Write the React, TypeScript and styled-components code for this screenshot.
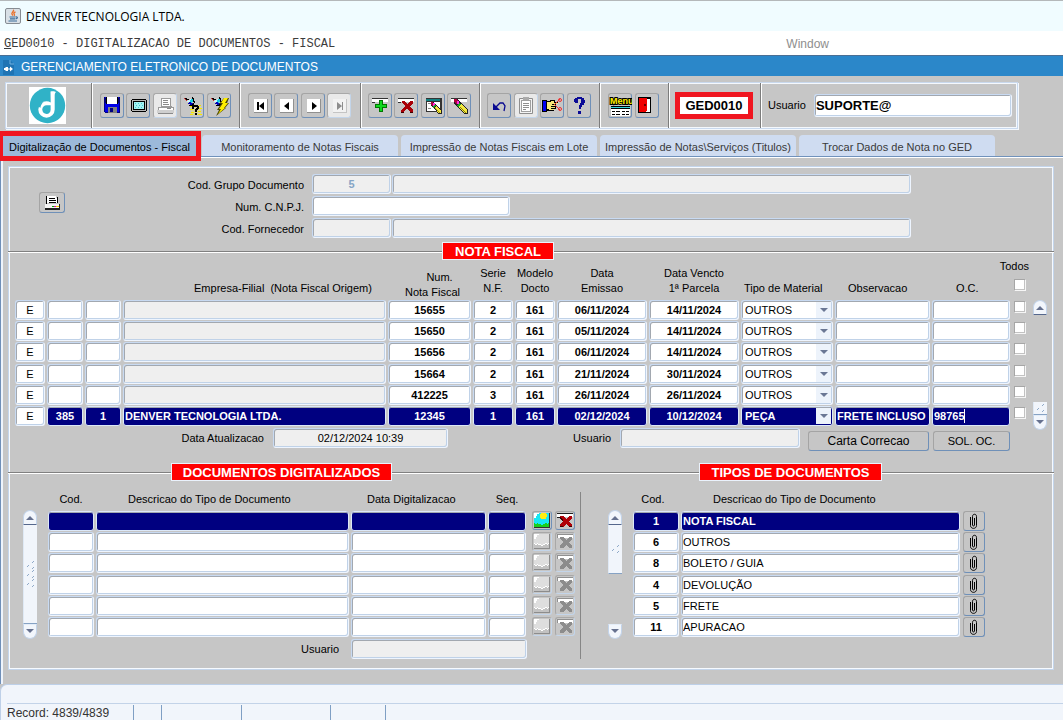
import React from 'react';
import styled, { createGlobalStyle, css } from 'styled-components';

const GlobalStyle = createGlobalStyle`
  *, *::before, *::after { box-sizing: border-box; }
  body {
    margin: 0;
    background: #c6c6c6;
    color: #000;
    font-family: "Liberation Sans", Arial, sans-serif;
    font-size: 11px;
    line-height: 15px;
    overflow-x: hidden;
  }
  button, input, select { font: inherit; color: inherit; margin: 0; }
`;

/* ---------- window frame ---------- */

const Page = styled.div`
  min-height: 100vh;
  display: flex;
  flex-direction: column;
`;

const TitleBar = styled.header`
  display: flex;
  align-items: center;
  gap: 5px;
  height: 31px;
  padding-left: 5px;
  border-top: 1px solid #b4b8ba;
  background: #f0fcff;
  font-family: "Open Sans", "Noto Sans", sans-serif;
  font-size: 12px;
`;

const MenuBar = styled.nav`
  display: flex;
  justify-content: space-between;
  align-items: center;
  height: 24px;
  padding: 2px 234px 0 4px;
  background: #fff;
`;

const MenuLink = styled.a<{ $mono?: boolean }>`
  color: ${p => (p.$mono ? '#3c3c3c' : '#8e8e8e')};
  font-family: ${p => (p.$mono ? '"Liberation Mono", "Courier New", monospace' : 'inherit')};
  font-size: 12px;
  text-decoration: none;
  white-space: nowrap;
`;

const FormCaption = styled.div`
  display: flex;
  align-items: center;
  gap: 6px;
  height: 21px;
  padding: 2px 0 0 2px;
  border-top: 1px solid #4a6f94;
  background: #2b87c9;
  color: #fff;
  h1 { margin: 0; font-size: 12px; font-weight: 400; }
`;

const Workspace = styled.main`
  flex: 1;
  display: flex;
  flex-direction: column;
  background: #c6c6c6;
`;

/* ---------- toolbar ---------- */

const Toolbar = styled.div`
  display: flex;
  height: 47px;
  margin: 6px 45px 0 5px;
  border: 1px solid #c9d9ee;
  box-shadow: inset 0 0 0 1px #f4f8fd, 1px 1px 0 #f4f8fd;
`;

const ToolCell = styled.div<{ $width?: number }>`
  display: flex;
  align-items: center;
  justify-content: center;
  gap: 2px;
  flex: ${p => (p.$width ? `0 0 ${p.$width}px` : '1')};
  border-right: 1px solid #fff;
  &::after {
    content: '';
    align-self: stretch;
    width: 1px;
    margin-left: auto;
    background: #7c7c7c;
  }
  &:last-child { gap: 8px; border-right: 0; padding: 0 5px 0 6px; }
  &:last-child::after { content: none; }
`;

const ToolGroup = styled.div<{ $width: number }>`
  display: flex;
  justify-content: space-between;
  width: ${p => p.$width}px;
  margin-left: auto;
`;

const bevel = css`
  border: 1px solid;
  border-color: #a4a4a4 #6f90b8 #6f90b8 #a4a4a4;
  border-radius: 3px;
  &:disabled { border-color: #a8a8a8 #c3d5ea #c3d5ea #a8a8a8; }
`;

const IconButton = styled.button<{ $w?: number; $h?: number; $pale?: boolean }>`
  ${bevel}
  display: block;
  width: ${p => p.$w ?? 24}px;
  height: ${p => p.$h ?? 25}px;
  padding: 0;
  background: ${p => (p.$pale ? '#e9e9e9' : '#c6c6c6')};
  svg { display: block; margin: -1px; }
`;

const LogoCell = styled.div`
  width: 37px;
  height: 37px;
  margin-left: auto;
  background: #fff;
`;

const ProgramCode = styled.output`
  width: 78px;
  height: 27px;
  margin-left: auto;
  border: 5px solid #f01620;
  background: #fff;
  font-size: 13px;
  font-weight: 700;
  line-height: 17px;
  text-align: center;
`;

/* ---------- tabs ---------- */

const Tabs = styled.div`
  display: flex;
  align-items: flex-end;
  gap: 3px;
  margin-top: 6px;
  padding: 0 3px 1px;
  height: 23px;
  border-bottom: 1px solid #fff;
  box-shadow: inset 0 -1px 0 #7092bc;
`;

const Tab = styled.button<{ $active?: boolean }>`
  flex: 0 1 196px;
  height: 21px;
  padding: 3px 0 0;
  border: 0;
  border-radius: 4px 4px 0 0;
  background: #cfdcf1;
  color: #3a3a3a;
  white-space: nowrap;
  ${p =>
    p.$active &&
    css`
      position: relative;
      z-index: 1;
      flex-basis: 193px;
      height: 20px;
      margin-right: 3px;
      border-radius: 0;
      outline: 5px solid #f01620;
      background: #9cb9da;
      color: #000;
    `}
`;

/* ---------- form parts ---------- */

type Tone = 'plain' | 'muted' | 'active';

const fieldFrame = css<{ $tone?: Tone }>`
  border: 1px solid;
  border-color: #c8daf2 #eef5ff #eef5ff #c8daf2;
  border-radius: 3px;
  box-shadow: inset 1px 1px 0 #a2a8b0, inset -1px -1px 0 #c0d2e8;
  background: #fff;
  ${p => p.$tone === 'muted' && 'background: #efefef;'}
  ${p =>
    p.$tone === 'active' &&
    css`
      background: #000080;
      color: #fff;
      font-weight: 700;
      border-color: #dce8f8;
      box-shadow: inset 0 1px 0 #a2a8b0;
    `}
`;

const Field = styled.input<{ $tone?: Tone; $w?: number; $center?: boolean; $bold?: boolean; $grow?: boolean }>`
  ${fieldFrame}
  display: block;
  min-width: 0;
  width: ${p => (p.$w ? `${p.$w}px` : '100%')};
  flex: ${p => (p.$grow ? '1' : 'none')};
  height: 20px;
  padding: 0 1px;
  outline: 0;
  text-align: ${p => (p.$center ? 'center' : 'left')};
  ${p => p.$bold && 'font-weight: 700;'}
`;

const UserField = styled(Field)`
  flex: 1;
  height: 23px;
  font-size: 13px;
  font-weight: 700;
`;

const CodeField = styled(Field)`
  color: #86a5c6;
`;

const Panel = styled.section`
  flex: 1;
  border-left: 1px solid #6f8fb8;
  box-shadow: inset 2px 0 0 #eef4fc;
  padding: 8px 9px 14px 7px;
`;

const PanelFrame = styled.div`
  border: 1px solid #c4d5eb;
  box-shadow: inset 0 0 0 1px #f6faff;
  padding: 1px;
  height: 100%;
`;

const Filters = styled.form`
  display: grid;
  grid-template-columns: 29px 26px 1fr;
  padding: 6px 141px 0 0;
`;

const PrintSlot = styled.div`
  padding-top: 18px;
`;

const FilterRows = styled.div`
  display: grid;
  gap: 2px;
`;

const FilterRow = styled.div`
  display: flex;
  gap: 1px;
  label { width: 247px; padding: 4px 8px 0 0; margin-right: -1px; text-align: right; }
`;

/* ---------- section titles ---------- */

const TitleRow = styled.div<{ $top: number }>`
  display: flex;
  height: 18px;
  margin: ${p => p.$top}px -2px 0;
`;

const Rule = styled.div<{ $w?: number }>`
  flex: ${p => (p.$w ? `0 0 ${p.$w}px` : '1')};
  height: 9px;
  align-self: flex-end;
  border-top: 1px solid #808080;
  box-shadow: inset 0 1px 0 #fff;
`;

const SectionTitle = styled.h2<{ $w: number }>`
  width: ${p => p.$w}px;
  margin: 0;
  border: 1px solid #eaf2fc;
  background: #f00;
  color: #fff;
  font-size: 13px;
  font-weight: 700;
  line-height: 17px;
  text-align: center;
  white-space: nowrap;
`;

/* ---------- tables ---------- */

const Grid = styled.table`
  flex: 1;
  min-width: 0;
  width: 100%;
  table-layout: fixed;
  border-spacing: 0;
  td { height: 21px; padding: 0 2px 0 0; vertical-align: top; }
  tbody tr:nth-child(3n) td { height: 22px; }
`;

const Head = styled.th<{ $h: number; $low?: boolean; $indent?: number }>`
  height: ${p => p.$h}px;
  padding: 0 2px ${p => (p.$low ? 0 : 4)}px ${p => p.$indent ?? 0}px;
  vertical-align: bottom;
  font-weight: 400;
  text-align: ${p => (p.$indent ? 'left' : 'center')};
  white-space: pre;
`;

const SelectAll = styled.label`
  display: flex;
  flex-direction: column;
  align-items: flex-end;
  gap: 7px;
  padding-bottom: 5px;
  line-height: 12px;
  input { margin: 0 3px 0 0; }
`;

const Check = styled.input.attrs({ type: 'checkbox' })`
  appearance: none;
  display: block;
  width: 12px;
  height: 12px;
  margin: 1px 0 0 2px;
  border: 1px solid;
  border-color: #a6a6a6 #f6f6f6 #f6f6f6 #a6a6a6;
  box-shadow: inset -1px -1px 0 #c2c2c2;
  background: #fff;
`;

const SelectBox = styled.div`
  position: relative;
  svg { position: absolute; right: 2px; top: 2px; pointer-events: none; }
`;

const Select = styled.select<{ $tone?: Tone }>`
  ${fieldFrame}
  appearance: none;
  display: block;
  width: 100%;
  height: 20px;
  padding: 0 16px 0 3px;
`;

const CaretCell = styled.div`
  position: relative;
  &::after {
    content: '';
    position: absolute;
    left: 32px;
    top: 3px;
    width: 1px;
    height: 14px;
    background: #fff;
  }
`;

const NotesArea = styled.div`
  display: flex;
  align-items: flex-start;
  gap: 2px;
  height: 168px;
  padding: 0 5px;
`;

const BelowRow = styled.div`
  display: flex;
  align-items: flex-start;
  justify-content: space-between;
  height: 23px;
  padding-right: 42px;
`;

const Inline = styled.div<{ $lead?: number }>`
  display: flex;
  gap: 9px;
  label { width: ${p => (p.$lead ? `${p.$lead}px` : 'auto')}; padding-top: 3px; text-align: right; }
`;

const TextButton = styled.button<{ $w: number; $large?: boolean }>`
  ${bevel}
  width: ${p => p.$w}px;
  height: 20px;
  margin: 3px 0 0 ${p => (p.$large ? -1 : -5)}px;
  padding: 0;
  background: #c6c6c6;
  font-size: ${p => (p.$large ? 12 : 11)}px;
`;

const Bottom = styled.div`
  display: flex;
  padding-bottom: 9px;
`;

const Pane = styled.div<{ $basis: number; $left: number; $right: number }>`
  flex: 1 1 ${p => p.$basis}px;
  min-width: 0;
  padding: 0 ${p => p.$right}px 0 ${p => p.$left}px;
`;

const PaneBody = styled.div`
  display: flex;
  align-items: flex-start;
  gap: 11px;
`;

const PaneFoot = styled.div`
  display: flex;
  justify-content: flex-end;
  gap: 12px;
  padding-right: 49px;
  label { padding-top: 3px; }
`;

const Splitter = styled.div`
  width: 1px;
  margin-top: 11px;
  background: #868686;
`;

const RowTool = styled.div<{ $gap: number }>`
  padding-left: ${p => p.$gap}px;
  margin-right: -2px;
`;

/* ---------- scroll bars ---------- */

const Bar = styled.div<{ $top: number; $h: number }>`
  display: flex;
  flex-direction: column;
  flex: 0 0 14px;
  height: ${p => p.$h}px;
  margin-top: ${p => p.$top}px;
`;

const BarButton = styled.button<{ $down?: boolean }>`
  width: 14px;
  height: 15px;
  padding: 0;
  border: 1px solid #c3d4ea;
  border-radius: ${p => (p.$down ? '0 0 7px 7px' : '7px 7px 0 0')};
  ${p => (p.$down ? 'border-top-color: #e4edf8;' : 'border-bottom-color: #55678c;')}
  background: #f2f6fc;
  svg { display: block; margin: 0; }
`;

const Track = styled.div<{ $end?: boolean }>`
  flex: 1;
  display: flex;
  flex-direction: column;
  justify-content: ${p => (p.$end ? 'flex-end' : 'flex-start')};
`;

const Thumb = styled.div<{ $h?: number }>`
  display: flex;
  align-items: center;
  justify-content: center;
  height: ${p => (p.$h ? `${p.$h}px` : '100%')};
  border-left: 1px solid #dfe9f5;
  border-bottom: 1px solid #86a2c4;
  background: #f1f5fb;
`;

/* ---------- status bar ---------- */

const StatusBar = styled.footer`
  height: 36px;
  padding: 18px 0 0 6px;
  border-top: 1px solid #bed0e8;
  border-left: 1px solid #bed0e8;
  border-radius: 7px 0 0 0;
  background: #f1f5fb;
`;

const StatusCells = styled.div`
  display: flex;
  height: 17px;
  border-top: 1px solid #c3d3e8;
  color: #333;
  font-size: 12px;
  line-height: 16px;
`;

const StatusCell = styled.div<{ $w: number }>`
  flex: 0 0 ${p => p.$w}px;
  margin-top: 1px;
  border-right: 1px solid #7f9fc4;
  white-space: nowrap;
`;

/* ---------- icons ---------- */

type ArtProps = { w?: number; h?: number; children: React.ReactNode };

const Art = ({ w = 24, h = 25, children }: ArtProps) => (
  <svg width={w} height={h} viewBox={`0 0 ${w} ${h}`} shapeRendering="crispEdges" aria-hidden="true">
    {children}
  </svg>
);

const JavaIcon = () => (
  <svg width="16" height="16" viewBox="0 0 16 16" aria-hidden="true">
    <rect x=".5" y=".5" width="15" height="15" rx="1.5" fill="#d9e0e6" stroke="#868c92" />
    <path d="M8.300 1.800c1.400 1.700-2.500 2.700-1.200 4.400.7.8.3 1.500.3 1.500M10.500 3.800c-2.200 1-1.700 1.800-1.200 2.500s0 1.200-.3 1.500" fill="none" stroke="#e8702a" strokeWidth="1.400" />
    <path d="M4.500 9h6M5 10.800h5.300M3.500 13h8.500M10.800 9c2-.6 2.200 1.300 0 1.800" fill="none" stroke="#3a6c9a" strokeWidth="1.200" />
  </svg>
);

const FormIcon = () => (
  <svg width="13" height="15" viewBox="0 0 13 15" aria-hidden="true">
    <path d="M1 0h7l4 4v11H1z" fill="#1f74b4" />
    <path d="M8 0v4h4" fill="none" stroke="#6fb0e0" />
    <path d="M5 7H3.500v1H2v2h1.500v1H5zM8 6.500 11 9l-3 2.500z" fill="#fff" />
    <path d="M5.500 7v4M6 9h2" stroke="#fff" />
  </svg>
);

const Logo = () => (
  <svg width="37" height="37" viewBox="0 0 37 37" role="img" aria-label="Denver">
    <circle cx="18.500" cy="18.500" r="17.700" fill="#30b2c7" />
    <path d="M21.500 4.500c2.200-.6 4.500-.3 5.500.5-1 .8-1.300 2-1.300 4v13.500a8.200 8.200 0 1 1-8.200-8.200c1.600 0 3 .4 4.200 1.200z" fill="#fff" />
    <path d="M21.600 18.500v4.300c0 2.600-1.700 4.200-4 4.200-2.500 0-4.300-1.900-4.300-4.400s1.900-4.300 4.300-4.300h4z" fill="#30b2c7" />
    <path d="M9 19.500a9 9 0 0 1 6-4.800c-2.400 1.700-3.500 4-3.500 6z" fill="#30b2c7" />
  </svg>
);

const SaveIcon = () => (
  <Art>
    <path d="M4 4h16v16H5l-1-1z" fill="#0000e8" />
    <path d="M4 5h3v5H4zM17 5h3v5h-3z" fill="#000070" />
    <path d="M4 4h1v15H4zM19 4h1v16h-1zM5 19h15v1H5z" fill="#000080" />
    <rect x="7" y="4" width="10" height="7" fill="#fff" />
    <path d="M6 4h1v7H6zM17 4h1v7h-1z" fill="#000" />
    <rect x="8" y="14" width="9" height="6" fill="#808080" />
    <rect x="10" y="15" width="3" height="4" fill="#000080" />
  </Art>
);

const ScreenIcon = () => (
  <Art>
    <path d="M6 6h14v1h1v11h-1v1H6v-1H5V7h1z" fill="#000" />
    <rect x="6" y="7" width="14" height="11" fill="#b8b8b8" />
    <rect x="7" y="8" width="12" height="9" fill="#000" />
    <rect x="8" y="9" width="10" height="7" fill="#a4f2f2" />
    <path d="M9 10h1v1H9zM12 10h1v1h-1zM15 10h1v1h-1zM10 12h1v1h-1zM13 12h1v1h-1zM16 12h1v1h-1zM9 14h1v1H9zM12 14h1v1h-1zM15 14h1v1h-1z" fill="#48c8d0" />
  </Art>
);

const PrinterOffIcon = () => (
  <Art>
    <path d="M8 5h9l1 8H8z" fill="#fff" stroke="#9a9a9a" />
    <path d="M10 7.500h5M10 9.500h5M10 11.500h6" stroke="#8a8a8a" />
    <rect x="5" y="14" width="15" height="3" fill="#fff" stroke="#9a9a9a" />
    <path d="M4 17h17v3H4z" fill="#cfcfcf" />
    <path d="M5 20h15v1H5zM14 15h4v1h-4z" fill="#8a8a8a" />
  </Art>
);

const Torch = () => (
  <g>
    <path d="M5 5h2v1h2v1h1v1H8V7H7v1H6V7H5z" fill="#000" />
    <path d="M5 6h1v1H5zM6 7h1v1H6zM4 5h1v1H4z" fill="#d03030" />
    <path d="M7 8h1V7h2V6h2v2h-1v2H9V9H7z" fill="#c8f8fc" />
    <path d="M10 7h1V6h1V5h1v2h1v2h-2v1h-1z" fill="#18cce0" />
    <path d="M12 4h1v1h1v3h1v2h-1V9h-1V6h-1z" fill="#000" />
    <path d="M8 10h1v-1h2v1h2v1h-1v1h-2v-1H8z" fill="#0000b8" />
    <path d="M9 12h3v-1h1v-1h1v2h-1v1H9z" fill="#000" />
  </g>
);

const QueryIcon = () => (
  <Art>
    <path d="M11 12h10v10H11z" fill="#eee070" fillOpacity=".5" />
    <path d="M10 13h2v1h-2zM19 12h2v1h-2zM10 16h3v1h-3zM19 15h3v1h-3zM11 19h3v1h-3zM18 18h3v1h-3zM10 21h3v1h-3zM18 21h4v1h-4z" fill="#f4e800" />
    <Torch />
    <path d="M13 12h5v1h1v3h-1v1h-1v2h-2v-3h1v-1h1v-1h-3v2h-2v-3h1zM15 20h2v2h-2z" fill="#000" />
  </Art>
);

const RunQueryIcon = () => (
  <Art>
    <Torch />
    <path d="M17 5h5l-2 5h2l-4 5h1l-10 8 3-6h-2l4-6h-2z" fill="#4a4400" shapeRendering="auto" />
    <path d="M17 5h4l-3 5h3l-4 5h1l-7 6 3-5h-2l4-6h-2z" fill="#ffee00" shapeRendering="auto" />
  </Art>
);

const NavIcon = ({ d, off }: { d: string; off?: boolean }) => (
  <Art>
    <rect x="6" y="6" width="14" height="14" fill={off ? '#c4c4c4' : '#909090'} />
    <rect x="6" y="6" width="13" height="13" fill={off ? '#f2f2f2' : '#fff'} />
    <path d={d} fill={off ? '#8c8c8c' : '#000'} shapeRendering="auto" />
  </Art>
);

const InsertIcon = () => (
  <Art>
    <path d="M4 5h16v4H4z" fill="#fff" />
    <path d="M4 5h16v1H4zM4 9h3v1H4z" fill="#333" />
    <path d="M11 7h4v4h4v4h-4v4h-4v-4H7v-4h4z" fill="#007800" />
    <path d="M12 8h2v4h4v2h-4v4h-2v-4H8v-2h4z" fill="#10d820" />
  </Art>
);

const DeleteIcon = () => (
  <Art>
    <path d="M4 5h16v4H4z" fill="#fff" />
    <path d="M4 5h16v1H4zM4 9h3v1H4z" fill="#333" />
    <path d="M8 8h3l2 3 3-3h3v2l-3 3 3 4v2h-3l-3-4-3 4H7v-2l4-4-3-3z" fill="#a80008" />
    <path d="M7 19h3M16 19h3" stroke="#400000" strokeWidth="1" />
  </Art>
);

const Brush = () => (
  <>
    <path d="M7 6h4l10 11v4h-4L7 10z" fill="#222" />
    <path d="M7 6h3l2 3-3 2-2-2z" fill="#b00040" />
    <path d="M10 8h2v3h-2z" fill="#ff30e0" />
    <path d="M12 10l2 1-3 3-1-2z" fill="#18b020" />
    <path d="M14 11l6 6v3h-3l-5-6z" fill="#f4e840" />
    <path d="M13 14l6 6" stroke="#8a8000" />
  </>
);

const ClearFormIcon = () => (
  <Art>
    <rect x="5" y="5" width="16" height="14" fill="#333" />
    <rect x="5" y="6" width="14" height="2" fill="#108080" />
    <rect x="6" y="9" width="13" height="9" fill="#fff" />
    <path d="M7 10h4v1H7zM7 15h3v1H7z" fill="#888" />
    <g transform="translate(4 4) scale(.8)"><Brush /></g>
  </Art>
);

const ClearRecordIcon = () => (
  <Art>
    <path d="M4 5h16v4H4z" fill="#fff" />
    <path d="M4 5h16v1H4z" fill="#333" />
    <Brush />
  </Art>
);

const UndoIcon = () => (
  <Art>
    <g shapeRendering="auto">
      <path d="M6 10v7h7z" fill="#0a0a90" />
      <path d="M9 14l4-4h3l2 3-1 5" fill="none" stroke="#0a0a90" strokeWidth="1.300" />
    </g>
  </Art>
);

const PasteIcon = () => (
  <Art>
    <path d="M5.500 5.500h13v15h-13z" fill="#f4f4f4" stroke="#8e8e8e" shapeRendering="auto" />
    <path d="M7.500 7.500h9v11h-9z" fill="#fff" stroke="#a0a0a0" />
    <path d="M9 4h6v3H9z" fill="#aaa" />
    <path d="M9 10.500h6M9 12.500h6M9 14.500h6M9 16.500h3" stroke="#8e8e8e" />
  </Art>
);

const HandIcon = () => (
  <Art>
    <path d="M2 7h5v12H2z" fill="#000" />
    <path d="M3 8h3v10H3z" fill="#0000f0" />
    <path d="M7 8h3V7h5v2h3v2h-2v5h-2v2H7z" fill="#000" />
    <path d="M7 9h4V8h3v2h4v1h-6v1h3v1h-4v1h4v1h-4v1h3v1H9v-1H7z" fill="#f8e878" />
    <g fill="none" stroke="#f03030" shapeRendering="auto">
      <path d="M14 12l6-6M14 11l6 6" />
      <circle cx="20" cy="7" r="1.500" />
      <circle cx="20" cy="16" r="1.500" />
    </g>
  </Art>
);

const HelpIcon = () => (
  <Art>
    <path d="M10 4h5v1h2v2h1v3h-1v2h-2v2h-1v2h-2v-4h1v-2h1V6h-3v4H8V9H7V6h1V5h2zM11 18h3v3h-3z" fill="#0a0a96" />
  </Art>
);

const MenuText = styled.text`
  font-family: "Liberation Sans Narrow", "Liberation Sans", sans-serif;
  font-size: 9px;
  font-weight: 700;
  fill: #fff000;
  stroke: #000;
  stroke-width: 2px;
  paint-order: stroke;
`;

const MenuIcon = () => (
  <Art>
    <MenuText x="2" y="11">Menu</MenuText>
    <rect x="3" y="13" width="19" height="10" fill="#fff" />
    <path d="M3 13h19v1H3zM3 15h19v1H3zM4 18h3v1H4zM8 18h4v1H8zM14 18h3v1h-3zM18 18h3v1h-3zM4 21h3v1H4zM8 21h4v1H8zM14 21h3v1h-3zM18 21h3v1h-3z" fill="#000" />
    <rect x="3" y="14" width="19" height="1" fill="#30d8e0" />
  </Art>
);

const ExitIcon = () => (
  <Art>
    <path d="M3 4h13v16H3z" fill="#000" />
    <path d="M4 5h8v13l-2 1H4z" fill="#f00000" />
    <path d="M12 6h3v13h-5l2-1z" fill="#fff" />
    <path d="M9 11h2v2H9z" fill="#600" />
  </Art>
);

const PrinterIcon = () => (
  <Art w={26} h={21}>
    <path d="M8 4h9l2 7H8z" fill="#fff" />
    <path d="M7 4h1v8H7zM10 6h6v1h-6zM10 8h7v1h-7zM10 10h7v1h-7zM18 5h1v6h-1z" fill="#000" />
    <path d="M6 12h15v4H6z" fill="#f4f4f4" />
    <path d="M6 16h15v2H6zM20 12h1v5h-1z" fill="#222" />
    <path d="M13 14h2v1h-2z" fill="#00b000" />
    <path d="M15 14h2v1h-2z" fill="#e000a0" />
    <path d="M17 14h3v1h-3z" fill="#f0d000" />
  </Art>
);

const PictureIcon = ({ off }: { off?: boolean }) => (
  <Art w={20} h={19}>
    <rect x="2" y="2" width="15" height="14" fill={off ? '#dedede' : '#18e8f4'} />
    <path d="M2 2h5v1H5v2H4v2H2z" fill="#fff" />
    {!off && <path d="M9 2h5v1h1v3h-1v2H9V7H8V3h1z" fill="#ffee10" />}
    <path d="M2 12h1v1h2v-1h1v1h3v1h2v-1h2v-1h2v1h1v-1h1v4H2z" fill={off ? '#c2c2c2' : '#18d020'} />
    {off && <path d="M2 11h1v1h2v-1h1v1h3v1h2v-1h2v-1h2v1h1v-1h1v1h-1v1h-1v-1h-2v1h-2v1H9v-1H6v-1H5v1H3v-1H2z" fill="#fff" />}
    <path d="M17 2h1v15H2v-1h15z" fill={off ? '#8c8c8c' : '#303030'} />
  </Art>
);

const RemoveIcon = ({ off }: { off?: boolean }) => (
  <Art w={20} h={19}>
    <path d="M2 2h16v4H2z" fill="#fff" />
    <path d={off ? 'M2 2h16v1H2zM2 2h1v4H2z' : 'M2 2h16v1H2zM2 6h3v1H2z'} fill={off ? '#909090' : '#202020'} />
    <path d="M5 5h3l3 3 3-3h3v2l-3 3 3 4v2h-3l-3-3-3 3H5v-2l3-4-3-3z" fill={off ? '#8c8c8c' : '#b00008'} />
    {!off && <path d="M5 15h3M14 15h3M5 6l3 4" stroke="#400000" />}
  </Art>
);

const ClipIcon = () => (
  <svg width="22" height="19" viewBox="0 0 22 19" aria-hidden="true">
    <path d="M7.500 5v8.500c0 3.800 6 3.800 6 0V4.500c0-3-4-3-4 0V13c0 1.300 2 1.300 2 0V6" fill="none" stroke="#000" strokeWidth="1" />
  </svg>
);

const DropArrow = () => (
  <svg width="15" height="16" viewBox="0 0 15 16" aria-hidden="true">
    <rect width="15" height="16" fill="#edf3fb" />
    <path d="M4 6h8l-4 4z" fill="#6a7794" />
  </svg>
);

const Grip = ({ lines }: { lines: number }) => (
  <svg width="8" height={lines * 9} viewBox={`0 0 8 ${lines * 9}`} shapeRendering="crispEdges" aria-hidden="true">
    {Array.from({ length: lines }, (_, i) => (
      <path key={i} d={`M0 ${i * 9 + 5}h1v-1h1v1h-1v1H0zM5 ${i * 9 + 1}h1v-1h1v1h-1v1H5zM5 ${i * 9 + 7}h1v-1h1v1h-1v1H5z`} fill="#8fa9c8" />
    ))}
  </svg>
);

/* ---------- composed parts ---------- */

type ScrollProps = { top: number; height: number; thumb?: number; end?: boolean; grip: number };

const Scroll = ({ top, height, thumb, end, grip }: ScrollProps) => (
  <Bar $top={top} $h={height}>
    <BarButton aria-label="Rolar para cima">
      <svg width="12" height="13" viewBox="0 0 12 13"><path d="M2 9l4-4 4 4z" fill="#66718f" /></svg>
    </BarButton>
    <Track $end={end}>
      <Thumb $h={thumb}><Grip lines={grip} /></Thumb>
    </Track>
    <BarButton $down aria-label="Rolar para baixo">
      <svg width="12" height="13" viewBox="0 0 12 13"><path d="M2 4h8l-4 4z" fill="#66718f" /></svg>
    </BarButton>
  </Bar>
);

type Tool = { label: string; icon: React.ReactNode; off?: boolean; pale?: boolean };

const groups: { cell: number; width: number; tools: Tool[] }[] = [
  {
    cell: 148,
    width: 131,
    tools: [
      { label: 'Salvar', icon: <SaveIcon /> },
      { label: 'Tela', icon: <ScreenIcon /> },
      { label: 'Imprimir', icon: <PrinterOffIcon />, off: true, pale: true },
      { label: 'Entrar consulta', icon: <QueryIcon /> },
      { label: 'Executar consulta', icon: <RunQueryIcon /> },
    ],
  },
  {
    cell: 121,
    width: 104,
    tools: [
      { label: 'Primeiro', icon: <NavIcon d="M9 9h2v8H9zM16 9v8l-5-4z" /> },
      { label: 'Anterior', icon: <NavIcon d="M15 9v8l-5-4z" /> },
      { label: 'Proximo', icon: <NavIcon d="M11 9v8l5-4z" /> },
      { label: 'Ultimo', icon: <NavIcon off d="M10 9v8l5-4zM15 9h1v8h-1z" />, off: true, pale: true },
    ],
  },
  {
    cell: 119,
    width: 104,
    tools: [
      { label: 'Inserir', icon: <InsertIcon /> },
      { label: 'Excluir', icon: <DeleteIcon /> },
      { label: 'Limpar tela', icon: <ClearFormIcon /> },
      { label: 'Limpar registro', icon: <ClearRecordIcon /> },
    ],
  },
  {
    cell: 120,
    width: 104,
    tools: [
      { label: 'Desfazer', icon: <UndoIcon /> },
      { label: 'Colar', icon: <PasteIcon />, off: true, pale: true },
      { label: 'Recortar', icon: <HandIcon /> },
      { label: 'Ajuda', icon: <HelpIcon /> },
    ],
  },
  {
    cell: 69,
    width: 51,
    tools: [
      { label: 'Menu', icon: <MenuIcon /> },
      { label: 'Sair', icon: <ExitIcon /> },
    ],
  },
];

const tabNames = [
  'Digitalização de Documentos - Fiscal',
  'Monitoramento de Notas Fiscais',
  'Impressão de Notas Fiscais em Lote',
  'Impressão de Notas\\Serviços (Titulos)',
  'Trocar Dados de Nota no GED',
];

type Note = {
  emp: string; fil: string; nome: string; num: string; serie: string;
  emissao: string; vencto: string; tipo: string; obs: string; oc: string; active?: boolean;
};

const other = (num: string, serie: string, emissao: string, vencto: string): Note => ({
  emp: '', fil: '', nome: '', num, serie, emissao, vencto, tipo: 'OUTROS', obs: '', oc: '',
});

const notes: Note[] = [
  other('15655', '2', '06/11/2024', '14/11/2024'),
  other('15650', '2', '05/11/2024', '14/11/2024'),
  other('15656', '2', '06/11/2024', '14/11/2024'),
  other('15664', '2', '21/11/2024', '30/11/2024'),
  other('412225', '3', '26/11/2024', '26/11/2024'),
  {
    emp: '385', fil: '1', nome: 'DENVER TECNOLOGIA LTDA.', num: '12345', serie: '1',
    emissao: '02/12/2024', vencto: '10/12/2024', tipo: 'PEÇA', obs: 'FRETE INCLUSO N', oc: '98765', active: true,
  },
];

const docTypes = [
  ['1', 'NOTA FISCAL'],
  ['6', 'OUTROS'],
  ['8', 'BOLETO / GUIA'],
  ['4', 'DEVOLUÇÃO'],
  ['5', 'FRETE'],
  ['11', 'APURACAO'],
];

const noteCols = [32, 38, 38, 0, 85, 42, 42, 92, 92, 94, 97, 80, 19];

const Cols = ({ widths }: { widths: number[] }) => (
  <colgroup>
    {widths.map((w, i) => <col key={i} width={w || undefined} />)}
  </colgroup>
);

const NoteRow = ({ note }: { note: Note }) => {
  const tone: Tone = note.active ? 'active' : 'plain';
  return (
    <tr>
      <td><Field $center defaultValue="E" aria-label="Situacao" /></td>
      <td><Field $center $tone={tone} defaultValue={note.emp} aria-label="Empresa" /></td>
      <td><Field $center $tone={tone} defaultValue={note.fil} aria-label="Filial" /></td>
      <td><Field $tone={note.active ? 'active' : 'muted'} defaultValue={note.nome} aria-label="Empresa-Filial" /></td>
      <td><Field $center $bold $tone={tone} defaultValue={note.num} aria-label="Num. Nota Fiscal" /></td>
      <td><Field $center $bold $tone={tone} defaultValue={note.serie} aria-label="Serie N.F." /></td>
      <td><Field $center $bold $tone={tone} defaultValue="161" aria-label="Modelo Docto" /></td>
      <td><Field $center $bold $tone={tone} defaultValue={note.emissao} aria-label="Data Emissao" /></td>
      <td><Field $center $bold $tone={tone} defaultValue={note.vencto} aria-label="Data Vencto" /></td>
      <td>
        <SelectBox>
          <Select $tone={tone} defaultValue={note.tipo} aria-label="Tipo de Material">
            <option>OUTROS</option>
            <option>PEÇA</option>
          </Select>
          <DropArrow />
        </SelectBox>
      </td>
      <td><Field $tone={tone} defaultValue={note.obs} aria-label="Observacao" /></td>
      <td>
        {note.active
          ? <CaretCell><Field $tone={tone} defaultValue={note.oc} aria-label="O.C." /></CaretCell>
          : <Field defaultValue={note.oc} aria-label="O.C." />}
      </td>
      <td><Check aria-label="Selecionar" /></td>
    </tr>
  );
};

export default function App() {
  return (
    <Page>
      <GlobalStyle />
      <TitleBar><JavaIcon />DENVER TECNOLOGIA LTDA.</TitleBar>
      <MenuBar>
        <MenuLink $mono href="#form"><u>G</u>ED0010 - DIGITALIZACAO DE DOCUMENTOS - FISCAL</MenuLink>
        <MenuLink href="#window">Window</MenuLink>
      </MenuBar>
      <FormCaption><FormIcon /><h1>GERENCIAMENTO ELETRONICO DE DOCUMENTOS</h1></FormCaption>

      <Workspace>
        <Toolbar>
          <ToolCell $width={87}><LogoCell><Logo /></LogoCell></ToolCell>
          {groups.map(g => (
            <ToolCell key={g.cell} $width={g.cell}>
              <ToolGroup $width={g.width}>
                {g.tools.map(t => (
                  <IconButton key={t.label} aria-label={t.label} disabled={t.off} $pale={t.pale}>{t.icon}</IconButton>
                ))}
              </ToolGroup>
            </ToolCell>
          ))}
          <ToolCell $width={92}><ProgramCode>GED0010</ProgramCode></ToolCell>
          <ToolCell>
            <label htmlFor="user">Usuario</label>
            <UserField id="user" defaultValue="SUPORTE@" />
          </ToolCell>
        </Toolbar>

        <Tabs role="tablist">
          {tabNames.map((name, i) => (
            <Tab key={name} role="tab" aria-selected={i === 0} $active={i === 0}>{name}</Tab>
          ))}
        </Tabs>

        <Panel id="form">
          <PanelFrame>
            <Filters>
              <span />
              <PrintSlot><IconButton type="button" $w={26} $h={21} aria-label="Imprimir"><PrinterIcon /></IconButton></PrintSlot>
              <FilterRows>
                <FilterRow>
                  <label htmlFor="grupo">Cod. Grupo Documento</label>
                  <CodeField id="grupo" $tone="muted" $w={79} $center $bold defaultValue="5" />
                  <Field $tone="muted" $grow readOnly aria-label="Descricao do grupo" />
                </FilterRow>
                <FilterRow>
                  <label htmlFor="cnpj">Num. C.N.P.J.</label>
                  <Field id="cnpj" $w={198} />
                </FilterRow>
                <FilterRow>
                  <label htmlFor="fornecedor">Cod. Fornecedor</label>
                  <Field id="fornecedor" $tone="muted" $w={79} />
                  <Field $tone="muted" $grow readOnly aria-label="Nome do fornecedor" />
                </FilterRow>
              </FilterRows>
            </Filters>

            <TitleRow $top={4}>
              <Rule $w={434} />
              <SectionTitle $w={112}>NOTA FISCAL</SectionTitle>
              <Rule />
            </TitleRow>

            <NotesArea>
              <Grid>
                <Cols widths={noteCols} />
                <thead>
                  <tr>
                    <Head $h={40} colSpan={3} />
                    <Head $h={40} $indent={71}>{'Empresa-Filial  (Nota Fiscal Origem)'}</Head>
                    <Head $h={40} $low $indent={17}>{'       Num.\nNota Fiscal'}</Head>
                    <Head $h={40}>{'Serie\nN.F.'}</Head>
                    <Head $h={40}>{'Modelo\nDocto'}</Head>
                    <Head $h={40}>{'Data\nEmissao'}</Head>
                    <Head $h={40}>{'Data Vencto\n1ª Parcela'}</Head>
                    <Head $h={40} $indent={3}>Tipo de Material</Head>
                    <Head $h={40} $indent={13}>Observacao</Head>
                    <Head $h={40} $indent={24}>O.C.</Head>
                    <Head $h={40}><SelectAll>Todos<Check /></SelectAll></Head>
                  </tr>
                </thead>
                <tbody>
                  {notes.map(n => <NoteRow key={n.num} note={n} />)}
                </tbody>
              </Grid>
              <Scroll top={40} height={130} thumb={13} end grip={1} />
            </NotesArea>

            <BelowRow>
              <Inline $lead={254}>
                <label htmlFor="atualizacao">Data Atualizacao</label>
                <Field id="atualizacao" $tone="muted" $w={175} $center defaultValue="02/12/2024 10:39" />
              </Inline>
              <Inline>
                <label htmlFor="usuario-nota">Usuario</label>
                <Field id="usuario-nota" $tone="muted" $w={180} />
                <TextButton $w={121} $large>Carta Correcao</TextButton>
                <TextButton $w={77}>SOL. OC.</TextButton>
              </Inline>
            </BelowRow>

            <TitleRow $top={12}>
              <Rule $w={163} />
              <SectionTitle $w={221}>DOCUMENTOS DIGITALIZADOS</SectionTitle>
              <Rule />
              <SectionTitle $w={183}>TIPOS DE DOCUMENTOS</SectionTitle>
              <Rule $w={172} />
            </TitleRow>

            <Bottom>
              <Pane $basis={570} $left={13} $right={4}>
                <PaneBody>
                  <Scroll top={29} height={129} grip={3} />
                  <Grid>
                    <Cols widths={[48, 0, 137, 40, 26, 22]} />
                    <thead>
                      <tr>
                        <Head $h={30}>Cod.</Head>
                        <Head $h={30} $indent={32}>Descricao do Tipo de Documento</Head>
                        <Head $h={30} $indent={16}>Data Digitalizacao</Head>
                        <Head $h={30}>Seq.</Head>
                        <Head $h={30} colSpan={2} />
                      </tr>
                    </thead>
                    <tbody>
                      {[0, 1, 2, 3, 4, 5].map(i => {
                        const tone: Tone = i === 0 ? 'active' : 'plain';
                        return (
                          <tr key={i}>
                            <td><Field $tone={tone} aria-label="Cod." /></td>
                            <td><Field $tone={tone} aria-label="Descricao" /></td>
                            <td><Field $tone={tone} aria-label="Data Digitalizacao" /></td>
                            <td><Field $tone={tone} aria-label="Seq." /></td>
                            <td><RowTool $gap={4}><IconButton $w={20} $h={19} disabled={i > 0} aria-label="Visualizar"><PictureIcon off={i > 0} /></IconButton></RowTool></td>
                            <td><RowTool $gap={1}><IconButton $w={20} $h={19} disabled={i > 0} aria-label="Excluir"><RemoveIcon off={i > 0} /></IconButton></RowTool></td>
                          </tr>
                        );
                      })}
                    </tbody>
                  </Grid>
                </PaneBody>
                <PaneFoot>
                  <label htmlFor="usuario-doc">Usuario</label>
                  <Field id="usuario-doc" $tone="muted" $w={176} />
                </PaneFoot>
              </Pane>
              <Splitter />
              <Pane $basis={471} $left={27} $right={66}>
                <PaneBody>
                  <Scroll top={29} height={129} thumb={49} grip={1} />
                  <Grid>
                    <Cols widths={[48, 0, 24]} />
                    <thead>
                      <tr>
                        <Head $h={30}><span>Cod.  </span></Head>
                        <Head $h={30} $indent={32}>Descricao do Tipo de Documento</Head>
                        <Head $h={30} />
                      </tr>
                    </thead>
                    <tbody>
                      {docTypes.map(([code, name], i) => (
                        <tr key={code}>
                          <td><Field $center $bold $tone={i === 0 ? 'active' : 'plain'} defaultValue={code} aria-label="Cod." /></td>
                          <td><Field $tone={i === 0 ? 'active' : 'plain'} defaultValue={name} aria-label="Descricao" /></td>
                          <td><RowTool $gap={1}><IconButton $w={22} $h={20} aria-label={`Anexar ${name}`}><ClipIcon /></IconButton></RowTool></td>
                        </tr>
                      ))}
                    </tbody>
                  </Grid>
                </PaneBody>
              </Pane>
            </Bottom>
          </PanelFrame>
        </Panel>
      </Workspace>

      <StatusBar>
        <StatusCells>
          <StatusCell $w={127}>Record: 4839/4839</StatusCell>
          <StatusCell $w={28} />
          <StatusCell $w={80} />
          <StatusCell $w={89} />
          <StatusCell $w={55} />
        </StatusCells>
      </StatusBar>
    </Page>
  );
}
